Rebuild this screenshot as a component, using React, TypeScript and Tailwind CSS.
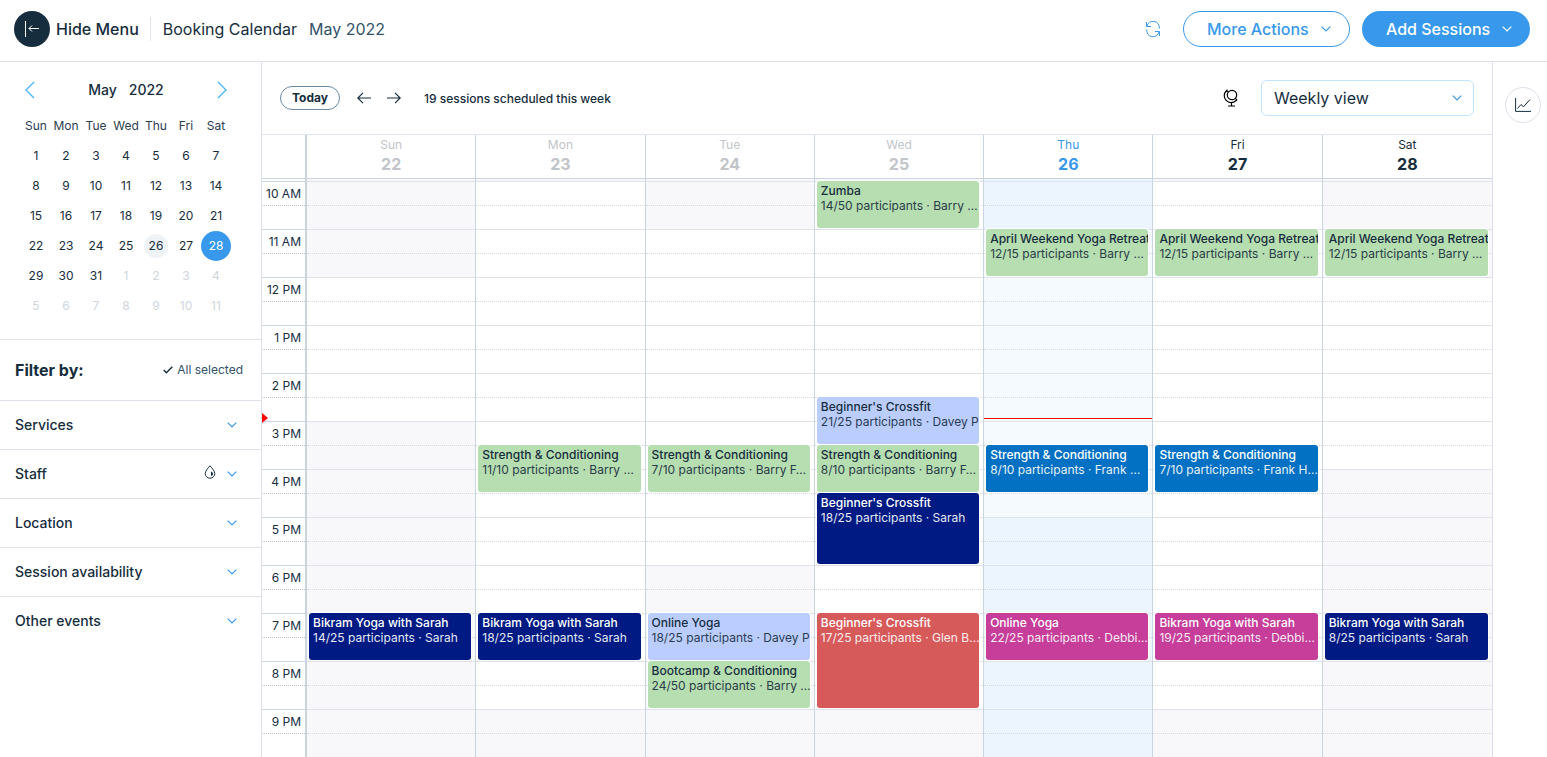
import React from "react";
import clsx from "clsx";

type Tone = "green" | "lilac" | "navy" | "blue" | "red" | "pink";

interface Session {
  title: string;
  details: string;
  tone: Tone;
  // half-hour slots, counted from 10 AM
  start: number;
  slots: number;
}

interface Day {
  name: string;
  date: number;
  closed: number[];
  sessions: Session[];
}

const HOURS = [
  "10 AM",
  "11 AM",
  "12 PM",
  "1 PM",
  "2 PM",
  "3 PM",
  "4 PM",
  "5 PM",
  "6 PM",
  "7 PM",
  "8 PM",
  "9 PM",
];

const TONES: Record<Tone, string> = {
  green: "bg-[#b7deb1] text-[#162d3d]",
  lilac: "bg-[#bbcdff] text-[#162d3d]",
  navy: "bg-[#001a83] text-white",
  blue: "bg-[#0371c3] text-white",
  red: "bg-[#d75a5b] text-white",
  pink: "bg-[#c63d9a] text-white",
};

const TODAY = 26;

const DAYS: Day[] = [
  {
    name: "Sun",
    date: 22,
    closed: [0, 1, 5, 6, 7, 8, 9, 10, 11],
    sessions: [
      { title: "Bikram Yoga with Sarah", details: "14/25 participants · Sarah", tone: "navy", start: 18, slots: 2 },
    ],
  },
  {
    name: "Mon",
    date: 23,
    closed: [11],
    sessions: [
      { title: "Strength & Conditioning", details: "11/10 participants · Barry …", tone: "green", start: 11, slots: 2 },
      { title: "Bikram Yoga with Sarah", details: "18/25 participants · Sarah", tone: "navy", start: 18, slots: 2 },
    ],
  },
  {
    name: "Tue",
    date: 24,
    closed: [0, 8, 9, 10, 11],
    sessions: [
      { title: "Strength & Conditioning", details: "7/10 participants · Barry F…", tone: "green", start: 11, slots: 2 },
      { title: "Online Yoga", details: "18/25 participants · Davey P", tone: "lilac", start: 18, slots: 2 },
      { title: "Bootcamp & Conditioning", details: "24/50 participants · Barry …", tone: "green", start: 20, slots: 2 },
    ],
  },
  {
    name: "Wed",
    date: 25,
    closed: [11],
    sessions: [
      { title: "Zumba", details: "14/50 participants · Barry …", tone: "green", start: 0, slots: 2 },
      { title: "Beginner's Crossfit", details: "21/25 participants · Davey P", tone: "lilac", start: 9, slots: 2 },
      { title: "Strength & Conditioning", details: "8/10 participants · Barry F…", tone: "green", start: 11, slots: 2 },
      { title: "Beginner's Crossfit", details: "18/25 participants · Sarah", tone: "navy", start: 13, slots: 3 },
      { title: "Beginner's Crossfit", details: "17/25 participants · Glen B…", tone: "red", start: 18, slots: 4 },
    ],
  },
  {
    name: "Thu",
    date: 26,
    closed: [0, 7, 8, 9, 10, 11],
    sessions: [
      { title: "April Weekend Yoga Retreat", details: "12/15 participants · Barry …", tone: "green", start: 2, slots: 2 },
      { title: "Strength & Conditioning", details: "8/10 participants · Frank …", tone: "blue", start: 11, slots: 2 },
      { title: "Online Yoga", details: "22/25 participants · Debbi…", tone: "pink", start: 18, slots: 2 },
    ],
  },
  {
    name: "Fri",
    date: 27,
    closed: [11],
    sessions: [
      { title: "April Weekend Yoga Retreat", details: "12/15 participants · Barry …", tone: "green", start: 2, slots: 2 },
      { title: "Strength & Conditioning", details: "7/10 participants · Frank H…", tone: "blue", start: 11, slots: 2 },
      { title: "Bikram Yoga with Sarah", details: "19/25 participants · Debbi…", tone: "pink", start: 18, slots: 2 },
    ],
  },
  {
    name: "Sat",
    date: 28,
    closed: [0, 1, 6, 7, 8, 9, 10, 11],
    sessions: [
      { title: "April Weekend Yoga Retreat", details: "12/15 participants · Barry …", tone: "green", start: 2, slots: 2 },
      { title: "Bikram Yoga with Sarah", details: "8/25 participants · Sarah", tone: "navy", start: 18, slots: 2 },
    ],
  },
];

const WEEKS = [0, 1, 2, 3, 4, 5].map((w) =>
  [1, 2, 3, 4, 5, 6, 7].map((d) => w * 7 + d)
);

const FILTERS = ["Services", "Staff", "Location", "Session availability", "Other events"];

const Chevron = ({ className }: { className?: string }) => (
  <svg
    width="10"
    height="6"
    viewBox="0 0 10 6"
    fill="none"
    stroke="currentColor"
    strokeWidth="1.2"
    className={className}
    aria-hidden="true"
  >
    <path d="M.7.7 5 5 9.3.7" />
  </svg>
);

const Arrow = ({ flip }: { flip?: boolean }) => (
  <svg
    width="14"
    height="12"
    viewBox="0 0 14 12"
    fill="none"
    stroke="currentColor"
    strokeWidth="1.2"
    className={clsx(flip && "rotate-180")}
    aria-hidden="true"
  >
    <path d="M14 6H.8M6 .8.8 6 6 11.2" />
  </svg>
);

const BigChevron = ({ flip }: { flip?: boolean }) => (
  <svg
    width="10"
    height="18"
    viewBox="0 0 10 18"
    fill="none"
    stroke="currentColor"
    strokeWidth="1.4"
    className={clsx(flip && "rotate-180")}
    aria-hidden="true"
  >
    <path d="M9 1 1 9l8 8" />
  </svg>
);

function Header() {
  return (
    <header className="flex h-[62px] items-center border-b border-[#dfe1ea] pb-[3px] pl-3.5 pr-[17px]">
      <button type="button" className="flex items-center gap-1.5 font-medium">
        <span className="flex size-9 items-center justify-center rounded-full bg-[#162d3d] text-white">
          <svg width="16" height="16" viewBox="0 0 16 16" fill="none" stroke="currentColor" aria-hidden="true">
            <path d="M1.500 0v16M15 7.500H5M8 4.500l-3 3 3 3" />
          </svg>
        </span>
        Hide Menu
      </button>
      <div className="ml-[11px] h-6 w-px bg-[#dfe5eb]" />
      <h1 className="ml-3">Booking Calendar</h1>
      <span className="ml-3 text-[#32536a]">May 2022</span>

      <div className="ml-auto flex items-center">
        <button type="button" aria-label="Refresh" className="text-[#3899ec]">
          <svg width="16" height="16" viewBox="0 0 16 16" fill="none" stroke="currentColor" aria-hidden="true">
            <path d="M1.500 1v4.500H6M14.500 15v-4.500H10" />
            <path d="M1.900 5.300A6.300 6.300 0 0 1 14.300 7.500M14.100 10.700A6.300 6.300 0 0 1 1.700 8.500" />
          </svg>
        </button>
        <button
          type="button"
          className="ml-[22px] flex h-9 w-[167px] items-center justify-between rounded-full border border-[#3899ec] pl-[23px] pr-[18px] font-medium text-[#3899ec]"
        >
          More Actions
          <Chevron />
        </button>
        <button
          type="button"
          className="ml-3 flex h-9 w-[168px] items-center justify-between rounded-full bg-[#3899ec] pl-6 pr-[18px] font-medium text-white"
        >
          Add Sessions
          <Chevron />
        </button>
      </div>
    </header>
  );
}

function MonthPicker() {
  return (
    <section aria-label="May 2022" className="h-[278px] border-b border-[#dfe1ea] px-[21px] pt-4">
      <div className="flex h-6 items-center justify-between pl-1 pr-[13px] text-[#4eb7f5]">
        <button type="button" aria-label="Previous month">
          <BigChevron />
        </button>
        <div className="flex gap-3 text-sm font-medium text-[#162d3d]">
          <span>May</span>
          <span>2022</span>
        </div>
        <button type="button" aria-label="Next month">
          <BigChevron flip />
        </button>
      </div>
      <table className="mt-[9px] w-[210px] table-fixed text-center text-xs">
        <thead>
          <tr className="h-[30px]">
            {DAYS.map((day) => (
              <th key={day.name} scope="col" className="p-0 font-normal text-[#2b4050]">
                {day.name}
              </th>
            ))}
          </tr>
        </thead>
        <tbody>
          {WEEKS.map((week) => (
            <tr key={week[0]} className="h-[30px]">
              {week.map((n) => (
                <td key={n} className="p-0">
                  <button
                    type="button"
                    className={clsx(
                      "inline-flex items-center justify-center rounded-full align-middle",
                      n === 28 ? "size-[30px] bg-[#3899ec] text-white" : "size-6",
                      n === TODAY && "bg-[#eff3f6]",
                      n > 31 && "text-[#cfd6dd]"
                    )}
                  >
                    {n > 31 ? n - 31 : n}
                  </button>
                </td>
              ))}
            </tr>
          ))}
        </tbody>
      </table>
    </section>
  );
}

function Sidebar() {
  return (
    <aside className="w-[262px] shrink-0 border-r border-[#dfe1ea]">
      <MonthPicker />
      <div className="flex h-[60px] items-center justify-between pl-[15px] pr-[18px]">
        <h2 className="font-bold">Filter by:</h2>
        <button type="button" className="flex items-center gap-1 text-xs text-[#32536a]">
          <svg
            width="10"
            height="8"
            viewBox="0 0 10 8"
            fill="none"
            stroke="#162d3d"
            strokeWidth="1.4"
            aria-hidden="true"
          >
            <path d="M.7 4 3.400 6.700 9.300.8" />
          </svg>
          All selected
        </button>
      </div>
      {FILTERS.map((label) => (
        <button
          key={label}
          type="button"
          className="flex h-[49px] w-full items-center border-t border-[#dfe1ea] pl-[15px] pr-6 text-left text-sm font-medium"
        >
          <span className="grow">{label}</span>
          {label === "Staff" && (
            <svg
              width="12"
              height="14"
              viewBox="0 0 12 14"
              fill="none"
              stroke="#162d3d"
              className="mb-1 mr-[11px]"
              aria-hidden="true"
            >
              <path d="M6 .8C4 3 1.200 6.200 1.200 8.600a4.800 4.600 0 0 0 9.600 0C10.800 6.200 8 3 6 .8Z" />
              <path d="M7 6.500v4.600c1.400-.3 2-1.200 2-2.400S8 7 7 6.500Z" fill="#162d3d" stroke="none" />
            </svg>
          )}
          <Chevron className="text-[#3899ec]" />
        </button>
      ))}
    </aside>
  );
}

function Toolbar() {
  return (
    <div className="flex h-[72px] items-center px-[18px]">
      <button
        type="button"
        className="h-6 w-[60px] rounded-full border border-[#6a8ba6] text-xs font-bold"
      >
        Today
      </button>
      <button type="button" aria-label="Previous week" className="ml-[17px]">
        <Arrow />
      </button>
      <button type="button" aria-label="Next week" className="ml-4">
        <Arrow flip />
      </button>
      <p className="ml-[23px] pt-0.5 text-xs font-medium">19 sessions scheduled this week</p>

      <button type="button" aria-label="Time zone" className="ml-auto mr-[22px] text-black">
        <svg width="16" height="18" viewBox="0 0 16 18" fill="none" stroke="currentColor" strokeWidth="1.2" aria-hidden="true">
          <circle cx="9" cy="6" r="4.700" />
          <path d="M4.500.6 3.400 1.700A6.700 6.700 0 0 0 12.900 11.700l1.200-1M3.200 1.400l1.600 1.800M12.300 9.400l1.700 1.800M8.500 13.500V17M5 17h7" />
        </svg>
      </button>
      <div className="relative w-[213px]">
        <select
          aria-label="Calendar view"
          defaultValue="Weekly view"
          className="h-9 w-full appearance-none rounded-md border border-[#c1e4fe] bg-white pl-3 pr-10"
        >
          <option>Daily view</option>
          <option>Weekly view</option>
        </select>
        <Chevron className="pointer-events-none absolute right-3 top-[15px] text-[#3899ec]" />
      </div>
    </div>
  );
}

function SessionCard({ session }: { session: Session }) {
  return (
    <button
      type="button"
      className={clsx(
        "z-10 col-start-1 mb-px ml-0.5 mr-1 flex min-w-0 flex-col overflow-hidden rounded-[3px] pl-1 pt-0.5 text-left text-xs leading-[15px] ring-1 ring-white",
        TONES[session.tone]
      )}
      style={{ gridRow: `${session.start + 2} / span ${session.slots}` }}
    >
      <span className="w-full whitespace-nowrap font-medium">{session.title}</span>
      <span className="w-full whitespace-nowrap opacity-90">{session.details}</span>
    </button>
  );
}

function DayColumn({ day }: { day: Day }) {
  const isToday = day.date === TODAY;
  const openBg = isToday ? "bg-[#f5fafe]" : "bg-white";
  const closedBg = isToday ? "bg-[#ecf4fd]" : "bg-[#f8f8fb]";

  return (
    <div className="relative grid min-w-0 grid-cols-[minmax(0,1fr)] grid-rows-[2px_repeat(24,24px)] border-r border-[#cbd5df] last:border-r-0">
      <div className={closedBg} />
      {HOURS.map((hour, i) => (
        <div
          key={hour}
          className={clsx(
            "col-start-1 grid grid-rows-[23px_24px] border-t border-[#dfe3eb]",
            day.closed.includes(i) ? closedBg : openBg
          )}
          style={{ gridRow: `${i * 2 + 2} / span 2` }}
        >
          <div />
          <div className="border-t border-dotted border-[#d5dae0]" />
        </div>
      ))}
      {day.sessions.map((session) => (
        <SessionCard key={session.start} session={session} />
      ))}
      {isToday && <div className="absolute inset-x-0 top-[239px] h-px bg-[#ff0000]" />}
    </div>
  );
}

function WeekGrid() {
  return (
    <>
      {/* Day names */}
      <div className="flex h-[45px] border-b border-t border-b-[#cbd5df] border-t-[#dfe5eb]">
        <div className="w-[45px] shrink-0 border-r-2 border-[#cbd5df]" />
        <div className="grid grow grid-cols-7">
          {DAYS.map((day) => (
            <div
              key={day.name}
              className={clsx(
                "flex flex-col items-center border-r border-[#cbd5df] pt-0.5 last:border-r-0",
                day.date < TODAY && "text-[#c2c5c9]",
                day.date === TODAY && "text-[#3899ec]"
              )}
            >
              <span className="text-xs leading-4">{day.name}</span>
              <span className="font-bold leading-[22px]">{day.date}</span>
            </div>
          ))}
        </div>
      </div>

      {/* Hours and sessions */}
      <div className="flex">
        <div className="relative w-[45px] shrink-0 border-r-2 border-[#cbd5df] pt-0.5">
          {HOURS.map((hour) => (
            <div
              key={hour}
              className="grid h-12 grid-rows-[23px_24px] border-t border-[#cbd5df] text-right text-xs"
            >
              <span className="pr-1 leading-6">{hour}</span>
              <div className="border-t border-dotted border-[#bcc5ce]" />
            </div>
          ))}
          <svg width="6" height="10" viewBox="0 0 6 10" className="absolute left-0 top-[234px]" aria-hidden="true">
            <path d="M0 0 6 5 0 10Z" fill="#ff0000" />
          </svg>
        </div>
        <div className="grid grow grid-cols-7">
          {DAYS.map((day) => (
            <DayColumn key={day.name} day={day} />
          ))}
        </div>
      </div>
    </>
  );
}

export default function App() {
  return (
    <div className="flex min-h-screen flex-col bg-white font-[Inter,'Liberation_Sans',sans-serif] text-base text-[#162d3d]">
      <Header />
      <div className="flex grow">
        <Sidebar />
        <main className="min-w-0 grow">
          <Toolbar />
          <WeekGrid />
        </main>
        <aside className="w-[55px] shrink-0 border-l border-[#dfe1ea] pl-3 pt-[25px]">
          <button
            type="button"
            aria-label="Analytics"
            className="flex size-9 items-center justify-center rounded-full border border-[#dfe1ea]"
          >
            <svg width="16" height="14" viewBox="0 0 16 14" fill="none" stroke="currentColor" aria-hidden="true">
              <path d="M.6 0v13.400H16M2.500 10.500l3.500-4 2.500 2.300L15 1.500" />
            </svg>
          </button>
        </aside>
      </div>
    </div>
  );
}
